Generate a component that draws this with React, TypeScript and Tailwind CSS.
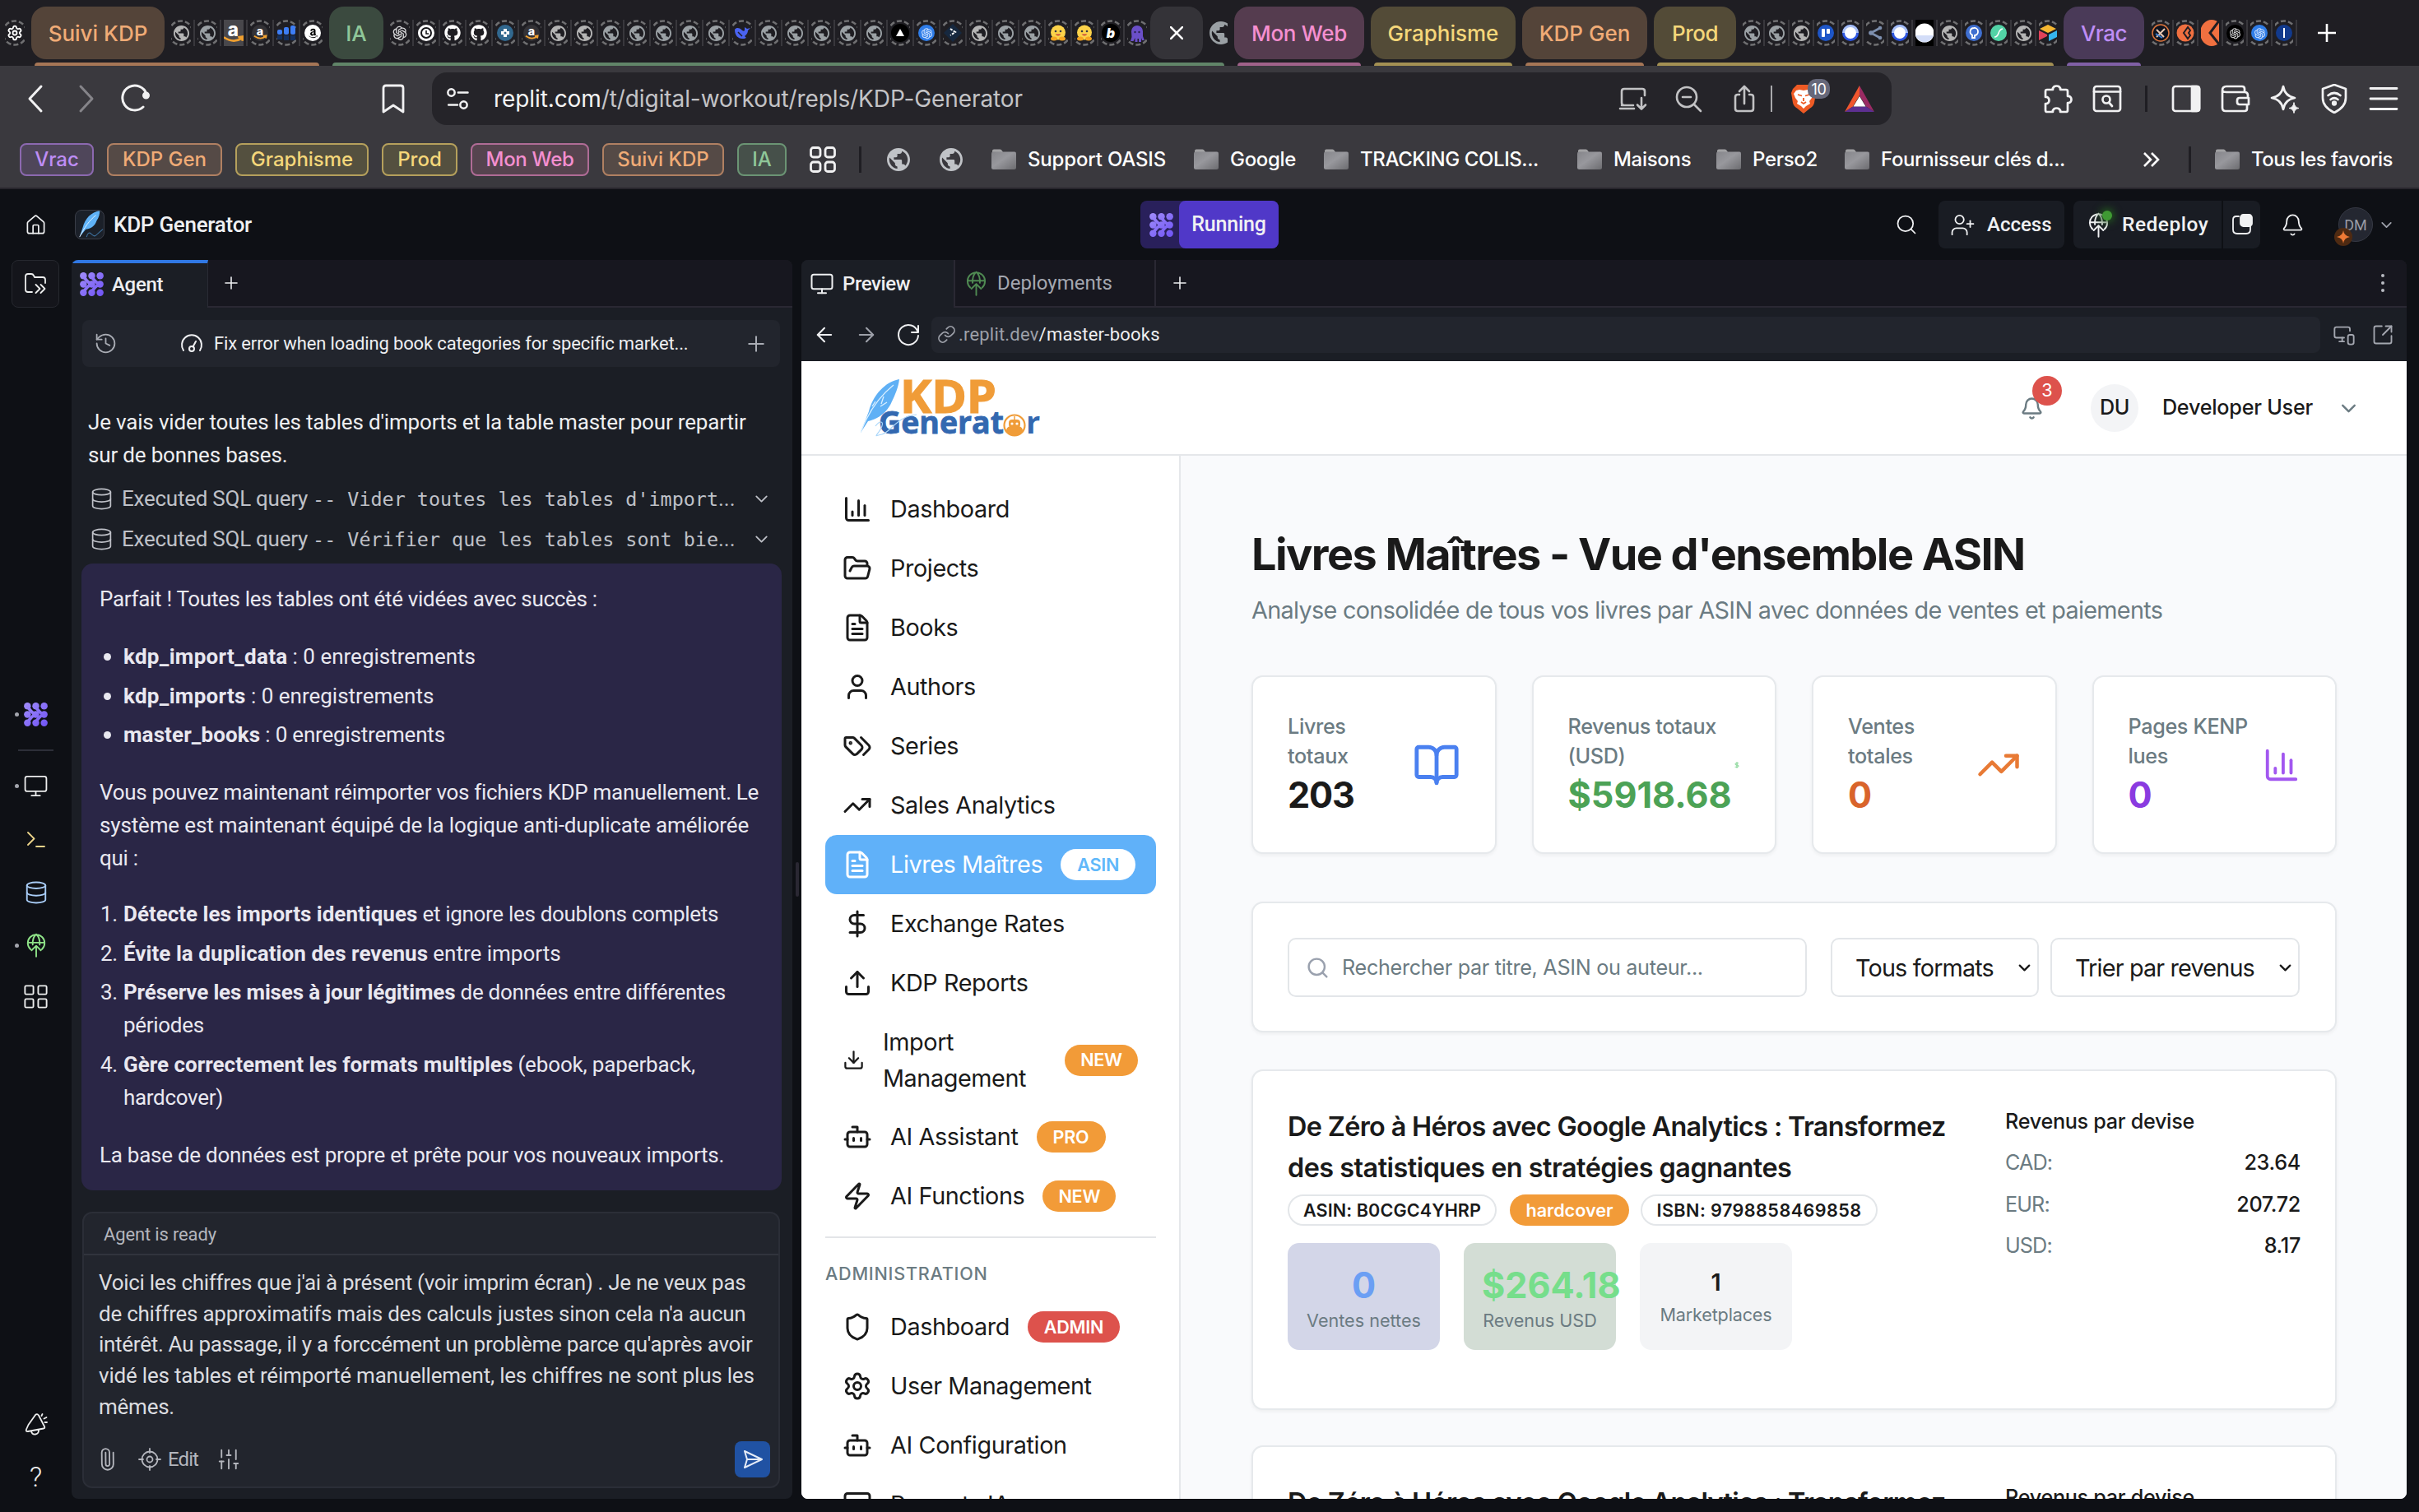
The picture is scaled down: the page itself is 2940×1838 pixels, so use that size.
import type { ReactNode } from "react";
import {
  ArrowLeft, ArrowRight, Bell, BookOpen, Bot, ChartColumn, ChevronDown, Database, DollarSign, Download,
  FileText, FolderOpen, History, House, LayoutGrid, Link, MessageSquare, Monitor, MonitorSmartphone, Paperclip, Plus,
  Search, Settings, Shield, SlidersVertical, SquareArrowOutUpRight, TrendingUp, Upload, User, UserPlus, Zap,
} from "lucide-react";
import { AiOutlineOpenAI } from "react-icons/ai";
import { FaAmazon, FaGithub } from "react-icons/fa";

/* ---------- shared drawings ---------- */

const GLOBE =
  "M12 2C6.48 2 2 6.48 2 12s4.48 10 10 10 10-4.48 10-10S17.52 2 12 2zm-1 17.93c-3.95-.49-7-3.85-7-7.93 0-.62.08-1.21.21-1.79L9 15v1c0 1.1.9 2 2 2v1.93zm6.9-2.54c-.26-.81-1-1.39-1.9-1.39h-1v-3c0-.55-.45-1-1-1H8v-2h2c.55 0 1-.45 1-1V7h2c1.1 0 2-.9 2-2v-.41c2.93 1.19 5 4.06 5 7.41 0 2.08-.8 3.97-2.1 5.39z";

function Globe({ className }: { className: string }) {
  return (
    <svg viewBox="2 2 20 20" className={className} fill="currentColor">
      <path d={GLOBE} />
    </svg>
  );
}

function AgentMark({ className, id }: { className: string; id: string }) {
  const fill = `url(#${id})`;
  return (
    <svg viewBox="0 0 24 24" className={className}>
      <defs>
        <linearGradient id={id} gradientUnits="userSpaceOnUse" x1="0" y1="0" x2="24" y2="24">
          <stop offset="0" stopColor="#a18dfa" />
          <stop offset="1" stopColor="#6f53f5" />
        </linearGradient>
      </defs>
      {[3.6, 12, 20.4].map((x) => [3.6, 12, 20.4].map((y) => <circle key={`${x}-${y}`} cx={x} cy={y} r="3.500" fill={fill} />))}
      <path d="M4 4Q7 10 12 12Q7 14 4 20M12 4Q15 10 20 12Q15 14 12 20" fill="none" stroke={fill} strokeWidth="3.200" strokeLinejoin="round" />
    </svg>
  );
}

function DeployMark({ className }: { className: string }) {
  return (
    <svg viewBox="0 0 24 24" className={className} fill="none" stroke="currentColor" strokeWidth="1.5" strokeLinecap="round" strokeLinejoin="round">
      <path d="M6.500 16A8.200 8.200 0 1 1 17.500 16M3.800 9.500h16.400M12 1.400C9 4 8.300 7 8.600 11.500M12 1.400c3 2.600 3.700 5.600 3.400 10.100" />
      <path d="M12 23V12.500M7.500 17 12 12.500 16.500 17" />
    </svg>
  );
}

function TagsMark({ className }: { className?: string; strokeWidth?: number }) {
  return (
    <svg viewBox="0 0 24 24" className={className} fill="none" stroke="currentColor" strokeWidth="2" strokeLinecap="round" strokeLinejoin="round">
      <path d="m15 5 6.300 6.300a2.400 2.400 0 0 1 0 3.400L17 19" />
      <path d="M9.586 5.586A2 2 0 0 0 8.172 5H3a1 1 0 0 0-1 1v5.172a2 2 0 0 0 .586 1.414L8.290 18.290a2.426 2.426 0 0 0 3.420 0l3.580-3.580a2.426 2.426 0 0 0 0-3.420z" />
      <circle cx="6.500" cy="9.500" r=".5" fill="currentColor" />
    </svg>
  );
}

function Folder() {
  return (
    <svg viewBox="0 0 30 30" className="size-[30px] shrink-0">
      <defs>
        <linearGradient id="folder" x1="0" y1="0" x2="1" y2="1">
          <stop offset="0" stopColor="#85858a" />
          <stop offset=".45" stopColor="#98989d" />
          <stop offset="1" stopColor="#6c6c70" />
        </linearGradient>
      </defs>
      <path d="M1 4.500Q1 2.500 3 2.500H10.500Q12 2.500 12.800 4L14 6H1Z" fill="#a2a2a4" />
      <path d="M0 7.500Q0 5.500 2 5.500H28Q30 5.500 30 7.500V24.500Q30 27 27.500 27H2.500Q0 27 0 24.500Z" fill="url(#folder)" />
    </svg>
  );
}

/* ---------- browser tab strip ---------- */

type Kind = string;

/* Amazon favicon: white letter over the orange smile */
function Smile({ className, ink }: { className: string; ink: string }) {
  return (
    <svg viewBox="0 0 20 20" className={className}>
      <text x="9.500" y="12.500" textAnchor="middle" fontFamily="Inter" fontWeight="800" fontSize="15" fill={ink}>a</text>
      <path d="M2 13.500q8 5.500 15 .5M13.500 13.500l4-.5-.5 3.500" fill="none" stroke="#f0a030" strokeWidth="1.800" />
    </svg>
  );
}

function FavInner({ k }: { k: Kind }) {
  switch (k) {
    case "gear":
      return <Settings className="size-5 text-white" strokeWidth={2.2} />;
    case "amazon":
      return <span className="flex size-[20px] items-center justify-center rounded-full bg-[#333236]"><Smile className="size-[19px]" ink="#fff" /></span>;
    case "amazonSq":
      return <span className="flex h-8 w-6 items-center justify-center bg-[#48474b]"><Smile className="size-[30px] shrink-0" ink="#fff" /></span>;
    case "amazonWhite":
      return <span className="flex size-[20px] items-center justify-center rounded-full bg-white"><FaAmazon className="size-[13px] text-black" /></span>;
    case "bars":
      return (
        <svg viewBox="0 0 22 20" className="h-5 w-[22px]">
          <rect x="0" y="6" width="6" height="6" rx="2" fill="#3d7ef7" /><rect x="8" y="3" width="6" height="9" rx="2" fill="#3d7ef7" /><rect x="16" y="1" width="6" height="11" rx="2" fill="#3d7ef7" />
          <rect x="0" y="13" width="6" height="5" fill="#15305e" /><rect x="8" y="13" width="6" height="6" fill="#15305e" /><rect x="16" y="13" width="6" height="6" fill="#15305e" />
        </svg>
      );
    case "gpt":
      return <AiOutlineOpenAI className="size-[22px] text-[#d8d8da]" />;
    case "gptBlack":
      return <span className="flex size-[21px] items-center justify-center rounded-full bg-black"><AiOutlineOpenAI className="size-[17px] text-[#d8d8da]" /></span>;
    case "gptBlue":
      return <span className="flex size-[20px] items-center justify-center rounded-full bg-[#2f7de8]"><AiOutlineOpenAI className="size-[17px] text-[#cfe2ff]" /></span>;
    case "ring":
      return (
        <svg viewBox="0 0 20 20" className="size-[20px]"><circle cx="10" cy="10" r="10" fill="#fff" /><circle cx="10" cy="10" r="6" fill="none" stroke="#16161a" strokeWidth="2" /><path d="M10 7v4h3" fill="none" stroke="#16161a" strokeWidth="1.600" /></svg>
      );
    case "github":
      return <FaGithub className="size-5 text-white" />;
    case "puzzle":
      return (
        <svg viewBox="0 0 20 20" className="size-[20px]"><circle cx="10" cy="10" r="10" fill="#31688f" /><path d="M8 5h4v3h3v4h-3v3H8v-3H5V8h3z" fill="#fff" /><circle cx="10" cy="10" r="1.500" fill="#31688f" /></svg>
      );
    case "whale":
      return (
        <svg viewBox="0 0 20 20" className="size-[20px]"><path d="M1 6c0 7 4 11 9 11 2 0 3 0 5-1l-2-2c3-2 4-5 4-7l3-3-4 1-3-2v4c-1 1-2 1-4-1C7 4 3 3 1 6z" fill="#4a63f0" /><path d="M5 9l5 5" stroke="#1f1e23" strokeWidth="1.500" /></svg>
      );
    case "tri":
      return (
        <svg viewBox="0 0 22 22" className="size-[22px]"><circle cx="11" cy="11" r="11" fill="#000" /><path d="M11 6l5 9H6z" fill="#fff" /></svg>
      );
    case "code":
      return (
        <svg viewBox="0 0 22 22" className="size-[22px]"><path d="M11 0l11 11-11 11L0 11z" fill="#16283f" /><path d="M8 6l6 4-6 4" fill="none" stroke="#fff" strokeWidth="2" strokeDasharray="3 1.500" /></svg>
      );
    case "hug":
      return (
        <svg viewBox="0 0 20 20" className="size-[20px]"><circle cx="10" cy="9.500" r="9" fill="#fcd34a" /><circle cx="7" cy="8" r="1.300" fill="#3a3b45" /><circle cx="13" cy="8" r="1.300" fill="#3a3b45" /><path d="M6.500 11.500q3.500 4 7 0z" fill="#c7453a" /><ellipse cx="5" cy="17" rx="4" ry="2.500" fill="#f5a623" /><ellipse cx="15" cy="17" rx="4" ry="2.500" fill="#f5a623" /></svg>
      );
    case "b":
      return <span className="flex size-[22px] items-center justify-center rounded-full bg-black font-['Inter'] text-[16px] leading-none font-black text-white italic">b</span>;
    case "octo":
      return (
        <svg viewBox="0 0 20 22" className="h-[22px] w-5"><path d="M3 9a7 7 0 0 1 14 0v6l2 5h-3l-1-3v5h-3v-4h-1.500v4h-3v-5l-2 4H2l1.500-5z" fill="#6b4fc8" /><circle cx="7.500" cy="10" r="1.200" fill="#2a2150" /><circle cx="12.500" cy="10" r="1.200" fill="#2a2150" /></svg>
      );
    case "trello":
      return (
        <svg viewBox="0 0 20 20" className="size-[20px]"><circle cx="10" cy="10" r="10" fill="#1e56c8" /><rect x="5" y="5" width="4" height="10" rx="1" fill="#fff" /><rect x="11" y="5" width="4" height="6" rx="1" fill="#fff" /></svg>
      );
    case "orb":
      return (
        <svg viewBox="0 0 20 20" className="size-[20px]"><circle cx="10" cy="10" r="10" fill="#2e56e0" /><path d="M0 10a10 10 0 0 1 20 0z" fill="#a9c0f5" /><circle cx="10" cy="10" r="7" fill="#fff" /></svg>
      );
    case "share":
      return (
        <svg viewBox="0 0 20 20" className="size-[20px]"><path d="M16 4L5 10l11 6" fill="none" stroke="#7d8fae" strokeWidth="2.800" /><circle cx="16" cy="4" r="2.300" fill="#7d8fae" /><circle cx="16" cy="16" r="2.300" fill="#7d8fae" /><circle cx="5" cy="10" r="2.800" fill="#7d8fae" /></svg>
      );
    case "moon":
      return (
        <svg viewBox="0 0 24 32" className="h-8 w-6"><rect width="24" height="32" fill="#000" /><circle cx="12" cy="16" r="11.500" fill="#fff" /><path d="M1 19a11.500 11.500 0 0 0 22 0z" fill="#d3ddf8" /></svg>
      );
    case "bulb":
      return (
        <svg viewBox="0 0 20 20" className="size-[20px]"><circle cx="10" cy="10" r="10" fill="#3f6fd0" /><path d="M10 4a4.500 4.500 0 0 0-2 8.500V16h3v-3a4.500 4.500 0 0 0-1-9z" fill="none" stroke="#fff" strokeWidth="1.800" /></svg>
      );
    case "mint":
      return (
        <svg viewBox="0 0 20 20" className="size-[20px]"><circle cx="10" cy="10" r="10" fill="#52d3a6" /><path d="M5 15c7 0 3-9 10-10" fill="none" stroke="#fff" strokeWidth="1.600" /></svg>
      );
    case "cube":
      return (
        <svg viewBox="0 0 22 22" className="size-[22px]"><path d="M11 1l10 5-10 5L1 6z" fill="#f5b731" /><path d="M0 8l10 5v2L0 20z" fill="#e0425a" /><path d="M22 8l-10 5v8l10-5z" fill="#35b5ef" /></svg>
      );
    case "orange":
      return (
        <svg viewBox="0 0 22 22" className="size-[22px]"><circle cx="11" cy="11" r="10" fill="#10141f" stroke="#e0763c" strokeWidth="1.500" /><path d="M6 16L16 6M6 7l9 9" stroke="#e9c9b4" strokeWidth="2" /><path d="M5 12l8 5" stroke="#3c7dd0" strokeWidth="2" /></svg>
      );
    case "kite":
      return (
        <svg viewBox="0 0 22 22" className="size-[22px]"><circle cx="11" cy="11" r="10.500" fill="#f07040" /><path d="M14 4l-5 7 5 7 3-4-2-3 2-3z" fill="none" stroke="#1f1e23" strokeWidth="2" /></svg>
      );
    case "kiteBig":
      return (
        <svg viewBox="0 0 24 32" className="h-8 w-6"><ellipse cx="14" cy="16" rx="14" ry="16" fill="#f07040" /><path d="M24 0L12 16l12 15" fill="none" stroke="#1f1e23" strokeWidth="3" /></svg>
      );
    case "bar":
      return (
        <svg viewBox="0 0 22 22" className="size-[22px]"><circle cx="11" cy="11" r="10" fill="#123a8c" /><rect x="10" y="5" width="2" height="12" fill="#fff" /></svg>
      );
    default:
      return <Globe className={k === "globeLight" ? "size-[19px] text-[#b4b4b4]" : "size-[19px] text-[#9aa0a4]"} />;
  }
}

/* One squeezed background tab: favicon inside a dashed "sleeping" ring */
function Fav({ k, narrow, last }: { k: Kind; narrow?: boolean; last?: boolean }) {
  const bare = k === "amazonSq" || k === "moon" || k === "kiteBig";
  return (
    <div className={narrow ? "relative h-8 w-[22px] shrink-0" : "relative h-8 w-6 shrink-0"}>
      <div className="relative flex h-8 w-full items-center justify-center overflow-hidden">
        {!bare && (
          <svg viewBox="0 0 32 32" className="absolute top-0 left-1/2 size-8 max-w-none -translate-x-1/2">
            <circle cx="16" cy="16" r="14.500" fill="none" stroke="#6f6f71" strokeWidth="2.600" strokeDasharray="6.100 3.010" />
          </svg>
        )}
        <div className="relative flex shrink-0 items-center justify-center"><FavInner k={k} /></div>
      </div>
      {!last && <div className="absolute top-0 -right-[5px] h-8 w-[2px] bg-[#38373c]" />}
    </div>
  );
}

function TabGroup({ line, children }: { line: string; children: ReactNode }) {
  return (
    <div className="relative flex h-20 items-center gap-2">
      {children}
      <div className={`absolute right-1 bottom-0 left-1 h-1 rounded-t ${line}`} />
    </div>
  );
}

function GroupChip({ cls, children }: { cls: string; children: ReactNode }) {
  return <div className={`flex h-16 shrink-0 items-center justify-center rounded-[18px] text-[26px] font-medium ${cls}`}>{children}</div>;
}

const favs1 = ["globeLight", "globe", "amazonSq", "amazon", "bars", "amazonWhite"];
const favs2 = [
  "gpt", "ring", "github", "github", "puzzle", "amazon", "globeLight", "globeLight", "globe", "globe", "globe", "globe", "globe",
  "whale", "globe", "globe", "globe", "globe", "globe", "tri", "gptBlue", "code", "globeLight", "globe", "globe", "hug", "hug", "b", "octo",
];
const favs3 = ["globe", "globe", "globeLight", "trello", "orb", "share", "orb", "moon", "globeLight", "bulb", "mint", "globeLight", "cube"];
const favs4 = ["orange", "kite", "kiteBig", "gptBlack", "gptBlue", "bar"];

function TabStrip() {
  return (
    <div className="flex h-20 items-center gap-2 bg-[#1f1e23] pl-[6px]">
      <Fav k="gear" last />
      <TabGroup line="bg-[#a67656]">
        <GroupChip cls="w-[162px] bg-[#544439] text-[#f0ab76]">Suivi KDP</GroupChip>
        {favs1.map((k, i) => <Fav key={i} k={k} last={i === favs1.length - 1} />)}
      </TabGroup>
      <TabGroup line="bg-[#618569]">
        <GroupChip cls="w-[66px] bg-[#3b4a3f] text-[#8fc799]">IA</GroupChip>
        {favs2.map((k, i) => <Fav key={i} k={k} last={i === favs2.length - 1} />)}
        <div className="-ml-1 flex h-16 w-16 items-center justify-center rounded-[18px] bg-[#343338]">
          <svg viewBox="0 0 16 16" className="size-4" stroke="#fff" strokeWidth="2.600"><path d="M0 0l16 16M16 0L0 16" /></svg>
        </div>
        <div className="flex w-[22px] overflow-hidden text-[#9aa0a4]"><Globe className="size-[28px] shrink-0" /></div>
      </TabGroup>
      <TabGroup line="bg-[#a0628a]"><GroupChip cls="w-[158px] bg-[#553c4f] tracking-[-0.3px] text-[#f58fd0]">Mon Web</GroupChip></TabGroup>
      <TabGroup line="bg-[#a39053]"><GroupChip cls="w-[176px] bg-[#534b37] text-[#f5d77a]">Graphisme</GroupChip></TabGroup>
      <TabGroup line="bg-[#a67656]"><GroupChip cls="w-[152px] bg-[#544439] text-[#f0ab76]">KDP Gen</GroupChip></TabGroup>
      <TabGroup line="bg-[#a39053]">
        <GroupChip cls="w-[100px] bg-[#534b37] tracking-[-0.5px] text-[#f5d77a]">Prod</GroupChip>
        {favs3.map((k, i) => <Fav key={i} k={k} narrow last={i === favs3.length - 1} />)}
      </TabGroup>
      <TabGroup line="bg-[#8060a6]"><GroupChip cls="w-[98px] bg-[#4a3a58] tracking-[-0.5px] text-[#be8df5]">Vrac</GroupChip></TabGroup>
      <div className="ml-[1px] flex items-center gap-2">
        {favs4.map((k, i) => <Fav key={i} k={k} narrow />)}
      </div>
      <svg viewBox="0 0 22 22" className="ml-[22px] size-[22px]" stroke="#fff" strokeWidth="2.600"><path d="M11 0v22M0 11h22" /></svg>
    </div>
  );
}

/* ---------- browser toolbar ---------- */

function Ico({ children, className = "" }: { children: ReactNode; className?: string }) {
  return <div className={`flex size-10 shrink-0 items-center justify-center ${className}`}>{children}</div>;
}

function Line({ children, vb = "0 0 36 36", className = "size-9", w = 2.6 }: { children: ReactNode; vb?: string; className?: string; w?: number }) {
  return (
    <svg viewBox={vb} className={className} fill="none" stroke="currentColor" strokeWidth={w} strokeLinecap="round" strokeLinejoin="round">
      {children}
    </svg>
  );
}

function Toolbar() {
  return (
    <div className="flex h-20 items-center pl-6 text-[#f1f1f2]">
      <Ico><Line w={3}><path d="M24 3L10 18l14 15" /></Line></Ico>
      <Ico className="ml-5 text-[#858489]"><Line w={3}><path d="M12 3l14 15-14 15" /></Line></Ico>
      <Ico className="ml-5"><Line w={3}><path d="M32 12A15 15 0 1 0 28 28" /><circle cx="31.500" cy="14" r="3" fill="currentColor" /></Line></Ico>
      <Ico className="ml-[274px]"><Line w={2.8}><path d="M6 5q0-3 3-3h18q3 0 3 3v29L18 26 6 34z" /></Line></Ico>
      <div className="ml-[27px] flex h-16 w-[1774px] items-center rounded-[18px] bg-[#252429] pr-[19px] pl-[11px]">
        <Ico><svg viewBox="0 0 36 36" className="size-[30px]" fill="none" stroke="currentColor" strokeWidth="3" strokeLinecap="round"><circle cx="9" cy="9" r="5" /><path d="M19 9h14M5 27h13" /><circle cx="27" cy="27" r="5" /></svg></Ico>
        <div className="ml-6 flex-1 text-[28px] tracking-[-0.09px] whitespace-nowrap text-[#c3c3c6]"><span className="text-[#f4f4f5]">replit.com</span>/t/digital-workout/repls/KDP-Generator</div>
        <Ico className="text-[#c2c2c4]"><Line><path d="M32 14V9q0-3-3-3H7Q4 6 4 9v14q0 3 3 3M2 30h17M4 26h14M28 17v13M23 25.500l5 5 5-5" /></Line></Ico>
        <Ico className="ml-[27px] text-[#c2c2c4]"><Line><circle cx="16" cy="16" r="12" /><path d="M25 25l8 8M11 16h10" /></Line></Ico>
        <Ico className="ml-7 text-[#c2c2c4]"><Line><path d="M12 13h-2q-3 0-3 3v14q0 3 3 3h16q3 0 3-3V16q0-3-3-3h-2M18 24V3M12 9l6-6 6 6" /></Line></Ico>
        <div className="ml-3 h-8 w-[2px] bg-[#a9a9ac]" />
        <Ico className="relative ml-[18px]">
          <svg viewBox="0 0 32 36" className="h-9 w-8">
            <path d="M8 1h16l5 5 2 5-2 12q-1 4-5 6.500L16 36l-8-6.500q-4-2.500-5-6.500L1 11l2-5z" fill="#ee5a24" />
            <path d="M7 8l4-1 5 1 5-1 4 1 3 4-2 5-3 4 1 3-5 3-3 3-3-3-5-3 1-3-3-4-2-5z" fill="#fff" />
            <path d="M9 13l5 1.500M23 13l-5 1.500M16 17v4M13 22l3 2 3-2" stroke="#ee5a24" strokeWidth="1.800" fill="none" />
          </svg>
          <span className="absolute -top-1 left-[25px] flex h-6 w-[27px] items-center justify-center rounded-[10px] bg-[#66687a] text-[18px] tracking-tight text-white">10</span>
        </Ico>
        <Ico className="ml-7">
          <svg viewBox="0 0 36 32" className="h-8 w-9"><path d="M18 0L0 32l10-6.500L18 12z" fill="#f0562e" /><path d="M18 0l18 32-10-6.500L18 12z" fill="#9a2b63" /><path d="M0 32h36l-10-6.500H10z" fill="#5d2f91" /><path d="M18 13l7.500 12.500h-15z" fill="#fff" /></svg>
        </Ico>
      </div>
      <Ico className="ml-[182px]"><Line w={2.7}><path d="M3 9q0-2 2-2h7c-1-6 10-6 9 0h7q2 0 2 2v6c6-1 6 9 0 8v9q0 2-2 2h-7c1-6-10-6-9 0H5q-2 0-2-2v-8c6 1 6-9 0-8z" /></Line></Ico>
      <Ico className="ml-5"><Line w={2.7}><rect x="2" y="3" width="32" height="30" rx="3" /><path d="M2 9.500h32" /><circle cx="17" cy="19" r="4.500" /><path d="M20.500 23l3.500 4" /></Line></Ico>
      <div className="ml-[26px] h-8 w-[3px] bg-[#1f1e23]" />
      <Ico className="ml-[27px]"><Line w={2.7}><rect x="2" y="3" width="32" height="30" rx="3" /><path d="M25 3h6q3 0 3 3v24q0 3-3 3h-6z" fill="currentColor" /></Line></Ico>
      <Ico className="ml-5"><Line w={2.7}><path d="M2 8v21q0 4 4 4h23q3 0 3-3v-4M2 8q0-5 5-5h19q3 0 3 3v3M2 8q1 2 5 2h22q4 0 4 4v3M34 17H23q-3 0-3 3v2q0 3 3 3h11z" /></Line></Ico>
      <Ico className="ml-5"><Line w={2.7}><path d="M16 3q2 12 14 14Q18 19 16 31 14 19 2 17 14 15 16 3z" /><path d="M29 23q1 6 6 6.500-5 .5-6 6-1-5.500-6-6 5-.5 6-6.500z" fill="currentColor" strokeWidth="1" /></Line></Ico>
      <Ico className="ml-5"><Line w={2.7}><path d="M18 1l14 5v11c0 9-6 14-14 18C10 31 4 26 4 17V6z" /><path d="M10.500 14q7.500-6 15 0M13.500 19q4.500-3.500 9 0" /><circle cx="18" cy="23.500" r="1.800" fill="currentColor" /></Line></Ico>
      <Ico className="ml-5"><Line w={2.8}><path d="M2 5.500h32M2 18h32M2 30.500h32" /></Line></Ico>
    </div>
  );
}

function BmChip({ cls, children }: { cls: string; children: ReactNode }) {
  return <div className={`flex h-10 items-center justify-center rounded-[8px] border-2 text-[24px] font-medium ${cls}`}>{children}</div>;
}

function BmFolder({ cls, children }: { cls: string; children: ReactNode }) {
  return (
    <div className={`flex shrink-0 items-center gap-[14px] text-[24px] font-medium whitespace-nowrap text-white ${cls}`}>
      <Folder />
      {children}
    </div>
  );
}

function Bookmarks() {
  return (
    <div className="flex h-[68px] items-center pl-6">
      <div className="flex gap-4">
        <BmChip cls="w-[90px] border-[#8c69b0] bg-[#4f465a] text-[#be8df5]">Vrac</BmChip>
        <BmChip cls="w-[140px] border-[#b08062] bg-[#554a46] text-[#f0ab76]">KDP Gen</BmChip>
        <BmChip cls="w-[162px] border-[#b5a05c] bg-[#54503f] text-[#f5d77a]">Graphisme</BmChip>
        <BmChip cls="w-[92px] border-[#b5a05c] bg-[#54503f] text-[#f5d77a]">Prod</BmChip>
        <BmChip cls="w-[144px] border-[#b06c96] bg-[#56444f] tracking-[-0.3px] text-[#f58fd0]">Mon Web</BmChip>
        <BmChip cls="w-[148px] border-[#b08062] bg-[#554a46] text-[#f0ab76]">Suivi KDP</BmChip>
        <BmChip cls="w-[60px] border-[#6b9474] bg-[#46504a] text-[#8fc799]">IA</BmChip>
      </div>
      <svg viewBox="0 0 32 32" className="ml-7 size-8" fill="none" stroke="#f1f1f2" strokeWidth="2.800">
        <rect x="1.500" y="1.500" width="11.500" height="11.500" rx="3" /><rect x="19" y="1.500" width="11.500" height="11.500" rx="3" />
        <rect x="1.500" y="19" width="11.500" height="11.500" rx="3" /><rect x="19" y="19" width="11.500" height="11.500" rx="3" />
      </svg>
      <div className="ml-7 h-8 w-[3px] bg-[#1f1e23]" />
      <Globe className="ml-[31px] size-7 text-[#c0c3c7]" />
      <Globe className="ml-9 size-7 text-[#c0c3c7]" />
      <BmFolder cls="ml-[35px] w-[246px] tracking-[-0.18px]">Support OASIS</BmFolder>
      <BmFolder cls="w-[158px] tracking-[-0.3px]">Google</BmFolder>
      <BmFolder cls="w-[308px] tracking-[-0.41px]">TRACKING COLIS...</BmFolder>
      <BmFolder cls="w-[169px] tracking-[-0.3px]">Maisons</BmFolder>
      <BmFolder cls="w-[156px] tracking-[-0.3px]">Perso2</BmFolder>
      <BmFolder cls="w-[291px] tracking-[-0.4px]">Fournisseur clés d...</BmFolder>
      <svg viewBox="0 0 22 18" className="ml-[71px] h-[18px] w-[22px]" fill="none" stroke="#fff" strokeWidth="2.600"><path d="M2 1l8 8-8 8M11 1l8 8-8 8" /></svg>
      <div className="ml-[34px] h-8 w-[3px] bg-[#1f1e23]" />
      <BmFolder cls="ml-[29px] tracking-[-0.49px]">Tous les favoris</BmFolder>
    </div>
  );
}

/* ---------- replit workspace ---------- */

function WorkspaceHeader() {
  return (
    <div className="grid h-[86px] grid-cols-[1386px_1fr] items-center text-[#f0f1f3]">
      <div className="flex items-center pl-[30px]">
        <House className="size-[27px]" strokeWidth={1.5} />
        <div className="ml-[34px] flex size-9 items-center justify-center overflow-hidden rounded-[8px] border border-[#3a3d47] bg-[#1b2029]">
          <svg viewBox="0 0 36 36" className="size-9">
            <path d="M31 0C20 2 12 10 9 22L5 34l8-10c8-1 12-5 14-11 3-4 4-9 4-13z" fill="#5fb2f7" />
            <path d="M5 34C11 22 18 12 26 6" stroke="#e7f4ff" strokeWidth="1" fill="none" />
            <path d="M14 34q2-8 6-4t6 2 9-8" stroke="#3c6f9c" strokeWidth="1.200" fill="none" />
          </svg>
        </div>
        <span className="ml-[11px] text-[26px] font-medium tracking-[-0.27px]">KDP Generator</span>
      </div>
      <div className="flex items-center">
        <div className="flex h-[58px] w-[168px] items-center rounded-[8px] bg-[#29205b]">
          <div className="flex w-[47px] justify-center pl-1"><AgentMark id="mark-run" className="size-[29px]" /></div>
          <div className="flex h-full flex-1 items-center justify-center rounded-[8px] bg-[#5038c8] text-[25px] font-medium tracking-[-0.2px]">Running</div>
        </div>
        <Search className="ml-[749px] size-[28px]" strokeWidth={1.5} />
        <div className="ml-[25px] flex h-[58px] w-[153px] items-center rounded-[8px] bg-[#191c23] pl-[14px]">
          <UserPlus className="size-[31px]" strokeWidth={1.4} />
          <span className="ml-[14px] text-[24px] font-medium">Access</span>
        </div>
        <div className="relative ml-[11px] flex h-[58px] w-[180px] items-center rounded-l-[8px] bg-[#191c23] pl-[15px]">
          <DeployMark className="size-[31px]" />
          <span className="absolute top-[12px] left-[35px] size-3 rounded-full bg-[#3f9a33] shadow-[0_0_10px_3px_#23561f]" />
          <span className="ml-[13px] text-[24.500px] font-medium tracking-[0.5px]">Redeploy</span>
        </div>
        <div className="ml-[2px] flex h-[58px] w-[45px] items-center justify-center rounded-r-[8px] bg-[#191c23]">
          <Line vb="0 0 28 28" className="size-7" w={1.8}><path d="M10 4H7Q3 4 3 8v12q0 5 5 5h11q5 0 5-5v-4" /><rect x="12" y="2" width="14" height="14" rx="3.500" fill="currentColor" /></Line>
        </div>
        <Bell className="ml-[25px] size-[29px]" strokeWidth={1.5} />
        <div className="relative ml-[41px] flex size-[42px] items-center justify-center rounded-full border border-[#363944] bg-[#242731] text-[18px] text-[#9a9ca5]">
          DM
          <span className="absolute -bottom-[6px] -left-[6px] flex size-[22px] items-center justify-center rounded-full bg-[#4e2a12]">
            <svg viewBox="0 0 20 20" className="size-4" fill="#f07a35"><path d="M10 0q1 8.500 10 10-9 1.500-10 10Q9 11.500 0 10 9 8.500 10 0z" /></svg>
          </span>
        </div>
        <ChevronDown className="ml-[6px] size-[21px] text-[#a0a3ad]" strokeWidth={2} />
      </div>
    </div>
  );
}

function RailItem({ dot, cls, children }: { dot?: boolean; cls: string; children: ReactNode }) {
  return (
    <div className={`relative flex h-10 w-full shrink-0 items-center justify-center ${cls}`}>
      {dot && <span className="absolute top-[18px] left-[18px] size-[5px] rounded-full bg-[#a3a5ad]" />}
      {children}
    </div>
  );
}

function Rail() {
  return (
    <div className="flex w-[87px] shrink-0 flex-col items-start text-[#eceded]">
      <div className="ml-[14px] flex h-[58px] w-[58px] shrink-0 items-center justify-center rounded-[8px] border border-[#26282f] bg-[#14151b]">
        <Line vb="0 0 28 28" className="size-7" w={1.8}><path d="M10 24H5Q2 24 2 21V5q0-3 3-3h4q2 0 3 2l1 2h10q3 0 3 3v4M14.500 15l5 5-5 5M20.500 15l5 5-5 5" /></Line>
      </div>
      <RailItem dot cls="mt-[474px]"><AgentMark id="mark-rail" className="size-[29px]" /></RailItem>
      <div className="mt-[23px] ml-[22px] h-[2px] w-[43px] bg-[#2d2f38]" />
      <RailItem dot cls="mt-[22px]"><Monitor className="size-[31px]" strokeWidth={1.4} /></RailItem>
      <RailItem cls="mt-[25px] text-[#ecd48a]"><Line vb="0 0 24 20" className="h-5 w-6" w={1.8}><path d="M2 2l7.500 7.500L2 17M12 19h10" /></Line></RailItem>
      <RailItem cls="mt-[25px] text-[#a9cdf7]"><Database className="size-[30px]" strokeWidth={1.5} /></RailItem>
      <RailItem dot cls="mt-6 text-[#8fe388]"><DeployMark className="size-[30px]" /></RailItem>
      <RailItem cls="mt-[22px]"><LayoutGrid className="size-[35px]" strokeWidth={1.3} /></RailItem>
      <RailItem cls="mt-[480px]">
        <Line vb="0 0 28 28" className="size-7" w={1.8}><path d="M13 3Q15 1 17 3.500L24 17q1 2-1 2.500L4 23q-3 .5-2-2.500L4.500 15zM8 23q1 4 5 3.500t4-5M20.500 4l1-2M23.500 7.500l3-1.500M24.500 12h2.500" /></Line>
      </RailItem>
      <RailItem cls="mt-6"><span className="text-[34px] font-light">?</span></RailItem>
    </div>
  );
}

function SqlRow({ children }: { children: ReactNode }) {
  return (
    <div className="flex h-[49px] items-center text-[#bfc1c8]">
      <Database className="size-[29px] shrink-0" strokeWidth={1.4} />
      <span className="ml-[10px] shrink-0 text-[26px] tracking-[-0.25px] whitespace-nowrap">Executed SQL query</span>
      <span className="ml-[6px] flex-1 font-['DejaVu_Sans_Mono',monospace] text-[23.4px] whitespace-pre">{children}<span className="font-['Roboto'] text-[26px]">...</span></span>
      <ChevronDown className="mr-[25px] size-[25px] shrink-0" strokeWidth={1.7} />
    </div>
  );
}

function Li({ mark, children }: { mark: string; children: ReactNode }) {
  return (
    <li className="flex">
      <span className="w-[29px] shrink-0 pl-[1px]">{mark === "•" ? <span className="mt-[16px] ml-[4px] block size-[9px] rounded-full bg-[#e9e8f0]" /> : mark}</span>
      <span className="whitespace-nowrap">{children}</span>
    </li>
  );
}

function AgentPanel() {
  return (
    <div className="flex w-[876px] shrink-0 flex-col overflow-hidden rounded-[8px] bg-[#1b1e25] text-[#eeeff1]">
      <div className="flex h-[58px] shrink-0 bg-[#17171f]">
        <div className="flex w-[166px] items-center border-t-4 border-r border-[#2a2b35] border-t-[#3078e4] bg-[#1b1e25] pb-[3px] pl-[10px]">
          <AgentMark id="mark-tab" className="size-[29px]" />
          <span className="ml-[10px] text-[24px] font-medium tracking-[-0.3px]">Agent</span>
        </div>
        <div className="flex flex-1 items-center border-b-2 border-[#2a2833] pl-[16px]"><Plus className="size-6" strokeWidth={1.6} /></div>
      </div>
      <div className="mr-[15px] ml-[13px] mt-[15px] flex h-[57px] shrink-0 items-center rounded-[8px] bg-[#22252d] pr-[14px] pl-[14px]">
        <History className="size-[29px] text-[#a9acb4]" strokeWidth={1.5} />
        <Line vb="0 0 28 24" className="ml-[76px] h-6 w-7" w={2}><path d="M4 20A12 12 0 1 1 24 20" /><circle cx="14" cy="18" r="3" /><path d="M15.500 15.500L19 9" /></Line>
        <span className="ml-[13px] flex-1 text-[22px] tracking-[-0.14px] whitespace-nowrap">Fix error when loading book categories for specific market...</span>
        <Plus className="size-[30px] text-[#a9acb4]" strokeWidth={1.6} />
      </div>
      <div className="mt-[47px] ml-[20px] text-[26px] leading-[40px] tracking-[-0.18px] whitespace-nowrap">
        Je vais vider toutes les tables d'imports et la table master pour repartir<br />sur de bonnes bases.
      </div>
      <div className="mt-[9px] ml-[22px]">
        <SqlRow>-- Vider toutes les tables d'import</SqlRow>
        <SqlRow>-- Vérifier que les tables sont bie</SqlRow>
      </div>
      <div className="mr-[13px] ml-3 mt-[5px] h-[762px] shrink-0 rounded-[14px] bg-[#2a2646] px-[22px] pt-[23px] text-[26px] leading-[40px] tracking-[-0.31px] whitespace-nowrap text-[#e9e8f0]">
        <p>Parfait ! Toutes les tables ont été vidées avec succès :</p>
        <ul className="mt-[30px] flex flex-col gap-[7.5px]">
          <Li mark="•"><b className="tracking-[0.3px]">kdp_import_data</b> <span className="tracking-normal">: 0 enregistrements</span></Li>
          <Li mark="•"><b className="tracking-[0.3px]">kdp_imports</b> <span className="tracking-normal">: 0 enregistrements</span></Li>
          <Li mark="•"><b className="tracking-[0.1px]">master_books</b> <span className="tracking-[-0.2px]">: 0 enregistrements</span></Li>
        </ul>
        <p className="mt-[30px]">
          Vous pouvez maintenant réimporter vos fichiers KDP manuellement. Le<br /><span className="tracking-[-0.15px]">système est maintenant équipé de la logique anti-duplicate améliorée</span><br />qui :
        </p>
        <ol className="mt-[28px] flex flex-col gap-[7.5px]">
          <Li mark="1."><b className="tracking-normal">Détecte les imports identiques</b> et ignore les doublons complets</Li>
          <Li mark="2."><b className="tracking-[0.05px]">Évite la duplication des revenus</b> <span className="tracking-normal">entre imports</span></Li>
          <Li mark="3."><b className="tracking-[-0.15px]">Préserve les mises à jour légitimes</b> de données entre différentes<br />périodes</Li>
          <Li mark="4."><b className="tracking-normal">Gère correctement les formats multiples</b> <span className="tracking-[-0.15px]">(ebook, paperback,</span><br />hardcover)</Li>
        </ol>
        <p className="mt-[30px] tracking-[-0.26px]">La base de données est propre et prête pour vos nouveaux imports.</p>
      </div>
      <div className="mr-[15px] ml-[13px] mt-[26px] flex h-[336px] shrink-0 flex-col rounded-[12px] border-2 border-[#2b2e37] bg-[#22252d]">
        <div className="flex h-[51px] shrink-0 items-center border-b-2 border-[#31343d] pt-[1px] pl-[24px] text-[22px] tracking-[-0.15px] text-[#b4b6bd]">Agent is ready</div>
        <div className="mt-[15px] ml-[18px] text-[26px] leading-[37.7px] tracking-[-0.25px] whitespace-nowrap text-[#dcdde0]">
          <span className="tracking-[-0.3px]">Voici les chiffres que j'ai à présent (voir imprim écran) . Je ne veux pas</span><br />
          de chiffres approximatifs mais des calculs justes sinon cela n'a aucun<br />
          <span className="tracking-[-0.28px]">intérêt. Au passage, il y a forccément un problème parce qu'après avoir</span><br />
          <span className="tracking-[-0.2px]">vidé les tables et réimporté manuellement, les chiffres ne sont plus les</span><br />
          mêmes.
        </div>
        <div className="mt-[22px] flex h-11 items-center pr-[10px] pl-[14px] text-[#b4b6bd]">
          <Paperclip className="size-[28px] -rotate-45" strokeWidth={1.6} />
          <Line vb="0 0 28 28" className="ml-[24px] size-7" w={1.8}><circle cx="14" cy="14" r="9.500" /><circle cx="14" cy="14" r="3.500" /><path d="M14 1v5M14 22v5M1 14h5M22 14h5" /></Line>
          <span className="ml-[8px] text-[24px] tracking-[-0.9px]">Edit</span>
          <SlidersVertical className="ml-[22px] size-[30px]" strokeWidth={1.5} />
          <div className="ml-auto flex h-11 w-[43px] items-center justify-center rounded-[8px] bg-[#2052a3] text-[#e6ecf7]">
            <Line vb="0 0 26 26" className="size-[26px]" w={2}><path d="M3 3l21 10L3 23l3-10zM6 13h18" /></Line>
          </div>
        </div>
      </div>
    </div>
  );
}

/* ---------- previewed application ---------- */

function Logo() {
  return (
    <svg viewBox="0 0 218 72" className="h-[72px] w-[218px]">
      <path d="M47 1C30 4 15 20 10 40L0 66l9-14c14-3 24-12 29-24 4-8 8-18 9-27z" fill="#5fb0f5" />
      <path d="M0 66C8 44 20 24 40 8M18 28l-4 6M28 22l-3 9M24 34l8-5" stroke="#d9efff" strokeWidth="1.300" fill="none" />
      <text x="48" y="42" fontFamily="Open Sans" fontWeight="700" fontSize="56" textLength="117" lengthAdjust="spacingAndGlyphs" fill="#f09c38" stroke="#f09c38" strokeWidth="1.200">KDP</text>
      <text x="22" y="67" fontFamily="Open Sans" fontWeight="700" fontSize="38" textLength="152" lengthAdjust="spacingAndGlyphs" fill="#3368b0" stroke="#3368b0" strokeWidth=".8">Generat</text>
      <text x="201" y="67" fontFamily="Open Sans" fontWeight="700" fontSize="38" fill="#3368b0">r</text>
      <path d="M18 58c6-8 12-6 6 4s-8 8 2 6S44 46 68 44" stroke="#a8d6fa" strokeWidth="1.200" fill="none" />
      <circle cx="187" cy="57" r="12.500" fill="#fff" stroke="#f09c38" strokeWidth="2.200" />
      <path d="M177 64q0-5 5-6h10q5 1 5 6-4 6-10 6t-10-6z" fill="#f09c38" />
      <rect x="180" y="50" width="14" height="10" rx="4" fill="#f09c38" />
      <path d="M187 46v5" stroke="#f09c38" strokeWidth="1.500" />
      <circle cx="184" cy="55" r="1.600" fill="#fff" /><circle cx="190" cy="55" r="1.600" fill="#fff" />
    </svg>
  );
}

function Pill({ cls, children }: { cls: string; children: ReactNode }) {
  return <span className={`flex h-[38px] shrink-0 items-center justify-center rounded-full text-[21.6px] font-semibold tracking-[-0.25px] ${cls}`}>{children}</span>;
}

function NavItem({ icon: Icon, label, active, badge }: { icon: typeof Bell | typeof TagsMark; label: string; active?: boolean; badge?: ReactNode }) {
  return (
    <div className={`flex h-[72px] shrink-0 items-center rounded-[14px] pl-[21px] text-[28.8px] tracking-[-0.4px] whitespace-nowrap ${active ? "bg-[#60b1f9] text-white" : "text-[#1a1a1a]"}`}>
      <Icon className="mr-[22px] size-9 shrink-0" strokeWidth={2} />
      <span className="mr-[22px]">{label}</span>
      {badge}
    </div>
  );
}

function Sidebar() {
  return (
    <div className="flex w-[461px] shrink-0 flex-col overflow-hidden border-r-2 border-[#e5e7ea] bg-white pt-[29px] pr-7 pl-[29px]">
      <NavItem icon={ChartColumn} label="Dashboard" />
      <NavItem icon={FolderOpen} label="Projects" />
      <NavItem icon={FileText} label="Books" />
      <NavItem icon={User} label="Authors" />
      <NavItem icon={TagsMark} label="Series" />
      <NavItem icon={TrendingUp} label="Sales Analytics" />
      <NavItem icon={FileText} label="Livres Maîtres" active badge={<Pill cls="w-[91px] bg-white text-[#60b8fa]">ASIN</Pill>} />
      <NavItem icon={DollarSign} label="Exchange Rates" />
      <NavItem icon={Upload} label="KDP Reports" />
      <div className="flex h-[115px] shrink-0 items-center pr-[22px] pl-[21px] text-[28.8px] leading-[43.2px] tracking-[-0.42px] text-[#1a1a1a]">
        <Download className="mr-[22px] size-[27px] shrink-0" strokeWidth={2} />
        <span className="flex-1">Import<br />Management</span>
        <Pill cls="w-[89px] bg-[#f29b38] text-white">NEW</Pill>
      </div>
      <NavItem icon={Bot} label="AI Assistant" badge={<Pill cls="w-[84px] bg-[#f29b38] text-white">PRO</Pill>} />
      <NavItem icon={Zap} label="AI Functions" badge={<Pill cls="w-[89px] bg-[#f29b38] text-white">NEW</Pill>} />
      <div className="mt-[13px] h-[2px] shrink-0 bg-[#e3e5e8]" />
      <div className="mt-[28px] mb-[14px] h-[30px] shrink-0 text-[21.6px] leading-[30px] font-medium tracking-[0.75px] text-[#6b7b82]">ADMINISTRATION</div>
      <NavItem icon={Shield} label="Dashboard" badge={<Pill cls="w-[112px] bg-[#dd524c] text-white">ADMIN</Pill>} />
      <NavItem icon={Settings} label="User Management" />
      <NavItem icon={Bot} label="AI Configuration" />
      <NavItem icon={MessageSquare} label="Prompts IA" />
    </div>
  );
}

const CARD = "rounded-[14px] border-2 border-[#e6e9ec] bg-white shadow-[0_2px_4px_rgba(0,0,0,0.05)]";

function Stat({ label, value, tone, icon }: { label: ReactNode; value: string; tone: string; icon: ReactNode }) {
  return (
    <div className={`flex h-[217px] items-center justify-between pt-[1px] pr-[42px] pl-[42px] ${CARD}`}>
      <div className="whitespace-nowrap">
        <div className="text-[25.2px] leading-9 font-medium tracking-[-0.35px] text-[#6b7b82]">{label}</div>
        <div className={`text-[43.2px] leading-[58px] font-bold ${tone}`}>{value}</div>
      </div>
      {icon}
    </div>
  );
}

function Select({ cls, children }: { cls: string; children: ReactNode }) {
  return (
    <div className={`flex h-[72px] items-center justify-between rounded-[10px] border-2 border-[#e3e6e9] pt-[2px] pr-[4px] pl-[28px] text-[28.8px] tracking-[-0.84px] whitespace-nowrap text-[#1a1a1a] ${cls}`}>
      {children}
      <ChevronDown className="size-[23px]" strokeWidth={2.4} />
    </div>
  );
}

function Book() {
  return (
    <div className={`flex h-[414px] shrink-0 justify-between pt-[43px] pr-[42px] pl-[42px] text-[#1a1a1a] ${CARD}`}>
      <div>
        <div className="text-[32.4px] leading-[50.4px] font-semibold tracking-[-0.67px] whitespace-nowrap">
          De Zéro à Héros avec Google Analytics : Transformez<br /><span className="tracking-[-0.52px]">des statistiques en stratégies gagnantes</span>
        </div>
        <div className="mt-[6px] flex">
          <Pill cls="w-[254px] border-2 border-[#e3e6e9] !tracking-[0.09px]">ASIN: B0CGC4YHRP</Pill>
          <Pill cls="ml-4 w-[145px] bg-[#f29b38] !tracking-normal text-white">hardcover</Pill>
          <Pill cls="ml-[14px] w-[288px] border-2 border-[#e3e6e9] !tracking-[0.44px]">ISBN: 9798858469858</Pill>
        </div>
        <div className="mt-[21px] flex gap-[29px] text-center">
          <div className="h-[130px] w-[185px] rounded-[14px] bg-[#d3d6e8] px-[22px] pt-[23px]">
            <div className="text-[43.2px] leading-[57px] font-bold text-[#6b9ff4]">0</div>
            <div className="text-[21.6px] leading-[29px] whitespace-nowrap text-[#6b7b82]">Ventes nettes</div>
          </div>
          <div className="h-[130px] w-[185px] rounded-[14px] bg-[#d3ddd5] px-[22px] pt-[23px]">
            <div className="text-[43.2px] leading-[57px] font-bold whitespace-nowrap text-[#76de8b]">$264.18</div>
            <div className="text-[21.6px] leading-[29px] whitespace-nowrap text-[#6b7b82]">Revenus USD</div>
          </div>
          <div className="h-[130px] w-[185px] rounded-[14px] bg-[#f3f4f6] px-[22px] pt-[23px]">
            <div className="text-[28.8px] leading-[50px] font-semibold">1</div>
            <div className="text-[21.6px] leading-[29px] tracking-[-0.17px] whitespace-nowrap text-[#6b7b82]">Marketplaces</div>
          </div>
        </div>
      </div>
      <div className="w-[359px] text-[25.2px] leading-9 tracking-[-0.3px] whitespace-nowrap">
        <div className="font-medium">Revenus par devise</div>
        {[["CAD:", "23.64"], ["EUR:", "207.72"], ["USD:", "8.17"]].map(([c, v]) => (
          <div key={c} className="mt-[14.4px] flex justify-between">
            <span className="tracking-[-0.9px] text-[#6b7b82]">{c}</span>
            <span className="font-medium">{v}</span>
          </div>
        ))}
      </div>
    </div>
  );
}

function Page() {
  return (
    <div className="flex flex-1 flex-col overflow-hidden bg-white font-['Inter',sans-serif]">
      <div className="flex h-[115px] shrink-0 items-center border-b-2 border-[#e5e7ea] pt-[1px] pr-[56px] pl-[72px]">
        <Logo />
        <div className="relative ml-auto text-[#6b7b82]">
          <Bell className="size-[29px]" strokeWidth={2} />
          <span className="absolute -top-[25px] left-[15px] flex size-9 items-center justify-center rounded-full bg-[#dd524c] text-[21.6px] text-white">3</span>
        </div>
        <div className="ml-[57px] flex size-[58px] items-center justify-center rounded-full bg-[#f3f4f6] text-[25.2px] font-medium tracking-[-0.5px] text-[#1a1a1a]">DU</div>
        <span className="ml-[29px] text-[25.2px] font-medium tracking-[-0.24px] text-[#1a1a1a]">Developer User</span>
        <ChevronDown className="ml-[29px] size-[29px] text-[#6b7b82]" strokeWidth={2} />
      </div>
      <div className="flex min-h-0 flex-1">
        <Sidebar />
        <div className="flex flex-1 flex-col overflow-hidden bg-[#f9fafc] pt-[84px] pr-[85px] pl-[86px]">
          <h1 className="h-[72px] shrink-0 text-[54px] leading-[72px] font-bold tracking-[-1.56px] whitespace-nowrap text-[#1a1a1a]">Livres Maîtres - Vue d'ensemble ASIN</h1>
          <p className="mt-[10px] h-[43px] shrink-0 text-[28.8px] leading-[43px] tracking-[-0.68px] whitespace-nowrap text-[#6b7b82]">Analyse consolidée de tous vos livres par ASIN avec données de ventes et paiements</p>
          <div className="mt-[58px] grid shrink-0 grid-cols-4 gap-[43px]">
            <Stat label={<>Livres<br />totaux</>} value="203" tone="tracking-[-1.2px] text-[#1a1a1a]" icon={<BookOpen className="size-[58px] text-[#4a80f0]" strokeWidth={2} />} />
            <Stat label={<>Revenus totaux<br />(USD)</>} value="$5918.68" tone="text-[#4ca256]" icon={<DollarSign className="size-[8px] shrink-0 text-[#4cc264]" strokeWidth={2} />} />
            <Stat label={<>Ventes<br />totales</>} value="0" tone="text-[#d9642b]" icon={<TrendingUp className="size-[54px] text-[#e87a35]" strokeWidth={2} />} />
            <Stat label={<>Pages KENP<br />lues</>} value="0" tone="text-[#8a3be0]" icon={<ChartColumn className="size-[46px] text-[#a257f0]" strokeWidth={2} />} />
          </div>
          <div className={`mt-[58px] flex h-[159px] shrink-0 items-center pr-[43px] pl-[42px] ${CARD}`}>
            <div className="flex h-[72px] w-[631px] items-center rounded-[10px] border-2 border-[#e3e6e9] pt-[2px] pl-[20px]">
              <Search className="size-[29px] text-[#9aa1ae]" strokeWidth={2} />
              <span className="ml-[15px] text-[25.2px] tracking-[-0.31px] whitespace-nowrap text-[#6b7b82]">Rechercher par titre, ASIN ou auteur...</span>
            </div>
            <Select cls="ml-[29px] w-[253px]">Tous formats</Select>
            <Select cls="ml-[14px] w-[303px]">Trier par revenus</Select>
          </div>
          <div className="mt-[45px] flex shrink-0 flex-col gap-[43px]">
            <Book />
            <Book />
          </div>
        </div>
      </div>
    </div>
  );
}

function PreviewPanel() {
  return (
    <div className="flex w-[1951px] shrink-0 flex-col overflow-hidden rounded-[8px] bg-[#1b1e25] text-[#eeeff1]">
      <div className="flex h-[58px] shrink-0 bg-[#17171f]">
        <div className="flex w-[187px] items-center border-r-2 border-[#2a2833] bg-[#1b1e25] pl-[10px]">
          <Monitor className="size-[30px]" strokeWidth={1.6} />
          <span className="ml-[10px] text-[24px] font-medium tracking-[-0.4px]">Preview</span>
        </div>
        <div className="flex w-[244px] items-center border-r-2 border-b-2 border-[#2a2833] pl-[10px] text-[#a4a7b0]">
          <DeployMark className="size-[31px] text-[#4f8a52]" />
          <span className="ml-[10px] text-[24px]">Deployments</span>
        </div>
        <div className="flex flex-1 items-center justify-between border-b-2 border-[#2a2833] pr-[27px] pl-[17px]">
          <Plus className="size-6" strokeWidth={1.6} />
          <svg viewBox="0 0 4 22" className="h-[22px] w-1" fill="#b9bbc2"><circle cx="2" cy="2" r="2" /><circle cx="2" cy="11" r="2" /><circle cx="2" cy="20" r="2" /></svg>
        </div>
      </div>
      <div className="flex h-[65px] shrink-0 items-center pr-[15px] pl-[14px]">
        <ArrowLeft className="size-[28px]" strokeWidth={1.8} />
        <ArrowRight className="ml-[23px] size-[28px] text-[#9da0a9]" strokeWidth={1.8} />
        <Line vb="0 0 28 28" className="ml-[23px] size-7" w={2}><path d="M25.500 10.500A12 12 0 1 0 26 15M26 3v8h-8" /></Line>
        <div className="ml-[14px] flex h-11 flex-1 items-center rounded-[8px] bg-[#22252d] pl-[7px] text-[22px] tracking-[0.2px] whitespace-nowrap text-[#9da0a9]">
          <Link className="mr-[3px] size-[23px]" strokeWidth={1.8} />
          .replit.dev<span className="tracking-[0.25px] text-[#eeeff1]">/master-books</span>
        </div>
        <MonitorSmartphone className="ml-[15px] size-[28px] text-[#a4a7b0]" strokeWidth={1.6} />
        <SquareArrowOutUpRight className="ml-[19px] size-[28px] text-[#a4a7b0]" strokeWidth={1.6} />
      </div>
      <Page />
    </div>
  );
}

export default function App() {
  return (
    <div className="h-[1838px] w-[2940px] overflow-hidden bg-[#0e1015] font-['Inter',sans-serif]">
      <TabStrip />
      <div className="h-[150px] border-b-2 border-[#28262d] bg-[#3a393e]">
        <Toolbar />
        <Bookmarks />
      </div>
      <div className="font-['Roboto',sans-serif]">
        <WorkspaceHeader />
        <div className="flex h-[1506px]">
          <Rail />
          <AgentPanel />
          <div className="flex w-[11px] items-center justify-center"><div className="h-[42px] w-1 rounded-full bg-[#2a2833]" /></div>
          <PreviewPanel />
        </div>
      </div>
    </div>
  );
}
